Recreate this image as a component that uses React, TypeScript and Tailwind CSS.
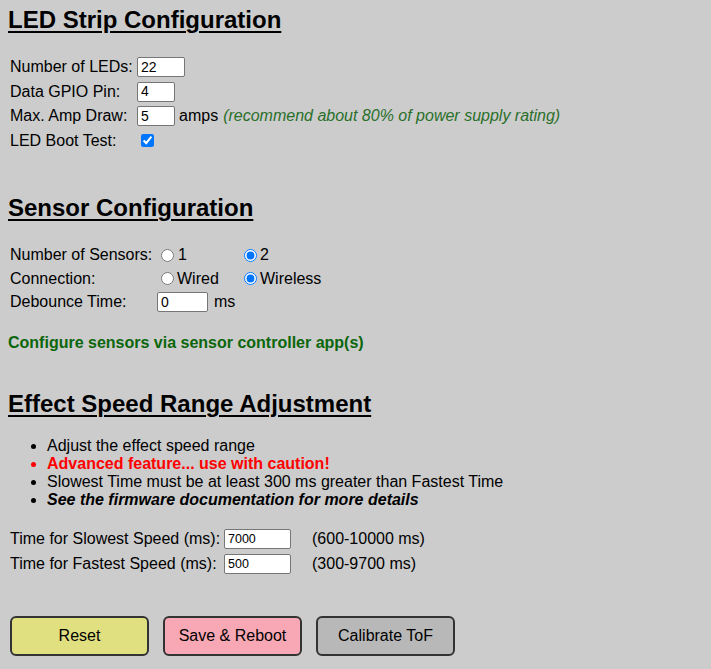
import { useState } from 'react';

const font = { fontFamily: '"Liberation Sans", Arial, sans-serif' };

function TextBox({ value, w, small }: { value: string; w: string; small?: boolean }) {
  const [v, setV] = useState(value);
  return (
    <input
      type="text"
      value={v}
      onChange={(e) => setV(e.target.value)}
      className={`${w} h-[20px] bg-white border border-[#767676] rounded-[2px] px-[3px] text-black ${small ? 'text-[12.5px]' : 'text-[14px]'} outline-none`}
    />
  );
}

function Heading({ children, className }: { children: string; className: string }) {
  return (
    <h2 className={`text-[24px] leading-[28px] font-bold underline decoration-[2px] underline-offset-[3px] text-black ${className}`}>
      {children}
    </h2>
  );
}

export default function App() {
  const [sensors, setSensors] = useState('2');
  const [conn, setConn] = useState('wireless');

  return (
    <div style={font} className="min-h-[669px] w-[711px] bg-[#cccccc] text-black text-[16px] pl-[8px] pt-[6px] pb-[12px]">
      {/* LED strip */}
      <Heading className="">LED Strip Configuration</Heading>
      <div className="mt-[21px] pl-[2px] flex flex-col">
        <div className="flex items-center h-[24.5px]">
          <span className="w-[127px]">Number of LEDs:</span>
          <TextBox value="22" w="w-[48px]" />
        </div>
        <div className="flex items-center h-[24.5px]">
          <span className="w-[127px]">Data GPIO Pin:</span>
          <TextBox value="4" w="w-[38px]" />
        </div>
        <div className="flex items-center h-[24.5px]">
          <span className="w-[127px]">Max. Amp Draw:</span>
          <TextBox value="5" w="w-[38px]" />
          <span className="ml-[4px]">amps</span>
          <span className="ml-[5px] italic text-[#2a6f2a]">(recommend about 80% of power supply rating)</span>
        </div>
        <div className="flex items-center h-[24.5px]">
          <span className="w-[131px]">LED Boot Test:</span>
          <input type="checkbox" defaultChecked className="w-[13px] h-[13px] accent-[#0075ff]" />
        </div>
      </div>

      {/* Sensors */}
      <Heading className="mt-[41px]">Sensor Configuration</Heading>
      <div className="mt-[21px] pl-[2px] flex flex-col">
        <div className="flex items-center h-[24px]">
          <span className="w-[146px]">Number of Sensors:</span>
          <label className="w-[83px] flex items-center">
            <input type="radio" name="n" checked={sensors === '1'} onChange={() => setSensors('1')} className="ml-[5px] mr-[4px] w-[13px] h-[13px] accent-[#0075ff]" />
            1
          </label>
          <label className="flex items-center">
            <input type="radio" name="n" checked={sensors === '2'} onChange={() => setSensors('2')} className="ml-[5px] mr-[3px] w-[13px] h-[13px] accent-[#0075ff]" />
            2
          </label>
        </div>
        <div className="flex items-center h-[23.5px]">
          <span className="w-[146px]">Connection:</span>
          <label className="w-[83px] flex items-center">
            <input type="radio" name="c" checked={conn === 'wired'} onChange={() => setConn('wired')} className="ml-[5px] mr-[3px] w-[13px] h-[13px] accent-[#0075ff]" />
            Wired
          </label>
          <label className="flex items-center">
            <input type="radio" name="c" checked={conn === 'wireless'} onChange={() => setConn('wireless')} className="ml-[5px] mr-[3px] w-[13px] h-[13px] accent-[#0075ff]" />
            Wireless
          </label>
        </div>
        <div className="flex items-center h-[23.5px]">
          <span className="w-[147px]">Debounce Time:</span>
          <TextBox value="0" w="w-[51px]" />
          <span className="ml-[6px]">ms</span>
        </div>
      </div>
      <p className="mt-[20px] font-bold text-[#0b660b] leading-[18px]">Configure sensors via sensor controller app(s)</p>

      {/* Effect speed */}
      <Heading className="mt-[38px]">Effect Speed Range Adjustment</Heading>
      <ul className="mt-[19px] pl-[39px] list-disc leading-[18px]">
        <li>Adjust the effect speed range</li>
        <li className="text-[#ff0000] font-bold">Advanced feature... use with caution!</li>
        <li>Slowest Time must be at least 300 ms greater than Fastest Time</li>
        <li className="font-bold italic">See the firmware documentation for more details</li>
      </ul>
      <div className="mt-[17px] pl-[2px] flex flex-col">
        <div className="flex items-center h-[25px]">
          <span className="w-[214px]">Time for Slowest Speed (ms):</span>
          <TextBox value="7000" w="w-[67px]" small />
          <span className="ml-[21px]">(600-10000 ms)</span>
        </div>
        <div className="flex items-center h-[25px]">
          <span className="w-[214px]">Time for Fastest Speed (ms):</span>
          <TextBox value="500" w="w-[67px]" small />
          <span className="ml-[21px]">(300-9700 ms)</span>
        </div>
      </div>

      {/* Buttons */}
      <div className="mt-[40px] pl-[2px] flex gap-[14px]">
        <button className="w-[139px] h-[40px] rounded-[6px] border-2 border-[#333333] bg-[#e0e080] text-[16px]">Reset</button>
        <button className="w-[139px] h-[40px] rounded-[6px] border-2 border-[#333333] bg-[#f8a8b4] text-[16px]">Save &amp; Reboot</button>
        <button className="w-[139px] h-[40px] rounded-[6px] border-2 border-[#333333] bg-[#b8b8b8] text-[16px]">Calibrate ToF</button>
      </div>
    </div>
  );
}
